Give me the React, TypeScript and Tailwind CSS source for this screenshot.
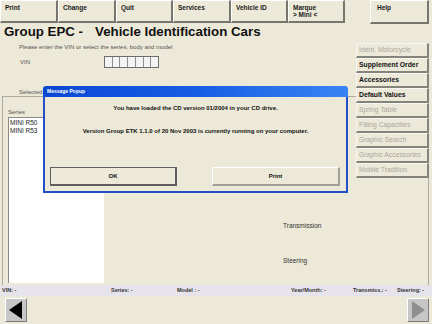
import React from 'react';

function ToolBtn({ w, h, children }: { w: string; h: string; children: React.ReactNode }) {
  return (
    <div
      className={`${w} ${h} shrink-0 border-t border-l border-t-white border-l-white border-r-2 border-b-2 border-r-[#77766e] border-b-[#77766e] pl-[4px] pt-[3px] text-[6.5px] font-bold leading-[7px] text-[#1a1a1a]`}
    >
      {children}
    </div>
  );
}

function SideBtn({ label, enabled }: { label: string; enabled?: boolean }) {
  return (
    <div
      className={
        enabled
          ? 'flex h-[15px] shrink-0 items-center whitespace-nowrap border-t border-l border-t-[#f7f6f0] border-l-[#f7f6f0] border-r-2 border-b-2 border-r-[#85847b] border-b-[#85847b] pl-[2px] text-[6.8px] font-bold leading-none text-[#111]'
          : 'flex h-[15px] shrink-0 items-center whitespace-nowrap border-t border-l border-t-[#f7f6f0] border-l-[#f7f6f0] border-r-2 border-b-2 border-r-[#85847b] border-b-[#85847b] pl-[2px] text-[6.8px] leading-none text-[#a9a79c]'
      }
    >
      {label}
    </div>
  );
}

export default function App() {
  return (
    <div className="relative flex h-[324px] w-[432px] flex-col overflow-hidden bg-[#ece9d8] font-['Liberation_Sans',Arial,sans-serif] text-black">
      {/* toolbar */}
      <div className="flex h-[24px] shrink-0 items-start">
        <ToolBtn w="w-[58px]" h="h-[23px]">Print</ToolBtn>
        <ToolBtn w="w-[58px]" h="h-[23px]">Change</ToolBtn>
        <ToolBtn w="w-[57px]" h="h-[23px]">Quit</ToolBtn>
        <ToolBtn w="w-[58px]" h="h-[23px]">Services</ToolBtn>
        <ToolBtn w="w-[57px]" h="h-[23px]">Vehicle ID</ToolBtn>
        <ToolBtn w="w-[57px]" h="h-[23px]">
          <div>Marque</div>
          <div>&gt; Mini &lt;</div>
        </ToolBtn>
        <div className="ml-[25px]">
          <ToolBtn w="w-[59px]" h="h-[24px]">
            <span className="pl-[2px]">Help</span>
          </ToolBtn>
        </div>
      </div>

      {/* title */}
      <div className="flex h-[16px] shrink-0 items-center whitespace-nowrap text-[13.3px] font-bold leading-[16px] text-[#111]">
        <span className="w-[95px] shrink-0 pl-[4px]">Group EPC -</span>
        <span>Vehicle Identification Cars</span>
      </div>

      {/* body */}
      <div className="flex min-h-0 flex-1">
        <div className="flex w-[356px] shrink-0 flex-col">
          <div className="ml-[19px] mt-[3px] h-[8px] whitespace-nowrap text-[6px] leading-[8px] text-[#555]">
            Please enter the VIN or select the series, body and model
          </div>
          <div className="mt-[5px] flex h-[12px] items-center">
            <span className="ml-[20px] w-[84px] text-[6px] leading-none text-[#555]">VIN</span>
            <div className="flex h-[12px] w-[55px] border border-[#6d6d6d] bg-[#f4f4f4]">
              <div className="flex-1" />
              <div className="flex-1 border-l border-[#8f8f8f]" />
              <div className="flex-1 border-l border-[#8f8f8f]" />
              <div className="flex-1 border-l border-[#8f8f8f]" />
              <div className="flex-1 border-l border-[#8f8f8f]" />
              <div className="flex-1 border-l border-[#8f8f8f]" />
              <div className="flex-1 border-l border-[#8f8f8f]" />
            </div>
          </div>
          <div className="ml-[19px] mt-[20px] h-[8px] text-[6px] leading-[8px] text-[#555]">Selected</div>
          <div className="ml-[2px] flex min-h-0 flex-1 border-l border-t border-[#aeaca1]">
            <div className="flex flex-col pl-[5px]">
              <div className="mt-[11px] h-[8px] text-[6px] leading-[8px] text-[#555]">Series</div>
              <div className="mb-[2px] mt-[1px] flex w-[96px] flex-1 flex-col border-l border-t border-[#8a8a8a] bg-white pl-[1px] pt-[1px] text-[6.5px] leading-[8px] text-[#222]">
                <span>MINI R50</span>
                <span>MINI R53</span>
              </div>
            </div>
            <div className="ml-[179px] flex flex-col pt-[125px] text-[6.5px] leading-[8px] text-[#333]">
              <span>Transmission</span>
              <span className="mt-[27px]">Steering</span>
            </div>
          </div>
        </div>
        <div className="flex w-[73px] shrink-0 flex-col pt-[3px]">
          <SideBtn label="Ident. Motorcycle" />
          <SideBtn label="Supplement Order" enabled />
          <SideBtn label="Accessories" enabled />
          <SideBtn label="Default Values" enabled />
          <SideBtn label="Spring Table" />
          <SideBtn label="Filling Capacities" />
          <SideBtn label="Graphic Search" />
          <SideBtn label="Graphic Accessories" />
          <SideBtn label="Mobile Tradition" />
          <div className="flex-1 border-r border-[#aeaca1]" />
        </div>
      </div>

      {/* status bar */}
      <div className="flex h-[11px] shrink-0 items-center whitespace-nowrap bg-[#e7e3eb] text-[5.5px] font-bold leading-none text-[#333]">
        <span className="w-[111px] shrink-0 pl-[2px]">VIN: -</span>
        <span className="w-[66px] shrink-0">Series: -</span>
        <span className="w-[114px] shrink-0">Model : -</span>
        <span className="w-[62px] shrink-0">Year/Month: -</span>
        <span className="w-[44px] shrink-0">Transmiss.: -</span>
        <span>Steering: -</span>
      </div>

      {/* nav */}
      <div className="flex h-[28px] shrink-0 items-start justify-between pt-[2px]">
        <div className="ml-[5px] flex h-[24px] w-[22px] items-center justify-center border border-t-white border-l-white border-r-[#7d7d7d] border-b-[#7d7d7d] bg-[#c6c6c6]">
          <svg width="14" height="18" viewBox="0 0 14 18">
            <polygon points="13,0 13,18 0,9" fill="#000" />
          </svg>
        </div>
        <div className="mr-[3px] flex h-[24px] w-[22px] items-center justify-center border border-t-white border-l-white border-r-[#7d7d7d] border-b-[#7d7d7d] bg-[#c6c6c6]">
          <svg width="14" height="18" viewBox="0 0 14 18">
            <polygon points="1,0 1,18 14,9" fill="#8e8e8e" />
          </svg>
        </div>
      </div>

      {/* popup */}
      <div className="absolute left-[43px] top-[86px] flex h-[107px] w-[305px] flex-col">
        <div className="flex h-[11px] shrink-0 items-center rounded-t-[3px] bg-linear-to-r from-[#0a47d3] via-[#175de4] to-[#3884f4] pl-[4px] text-[5px] font-bold leading-none text-white">
          Message Popup
        </div>
        <div className="flex flex-1 flex-col items-center border-x-2 border-b-2 border-[#2350c6] bg-[#ece9d8]">
          <div className="mt-[7px] h-[8px] whitespace-nowrap text-[6px] font-bold leading-[8px] text-[#111]">
            You have loaded the CD version 01/2004 in your CD drive.
          </div>
          <div className="mt-[15px] h-[8px] whitespace-nowrap text-[6px] font-bold leading-[8px] text-[#111]">
            Version Group ETK 1.1.0 of 20 Nov 2003 is currently running on your computer.
          </div>
          <div className="mt-[32px] flex w-full pl-[5px]">
            <div className="flex h-[19px] w-[127px] items-center justify-center border border-r-2 border-b-2 border-[#5f5f5f] text-[6px] font-bold leading-none text-[#111]">
              OK
            </div>
            <div className="ml-[35px] flex h-[19px] w-[128px] items-center justify-center border-t border-l border-r-2 border-b-2 border-t-white border-l-white border-r-[#a3a197] border-b-[#a3a197] text-[6px] font-bold leading-none text-[#111]">
              Print
            </div>
          </div>
        </div>
      </div>
    </div>
  );
}
